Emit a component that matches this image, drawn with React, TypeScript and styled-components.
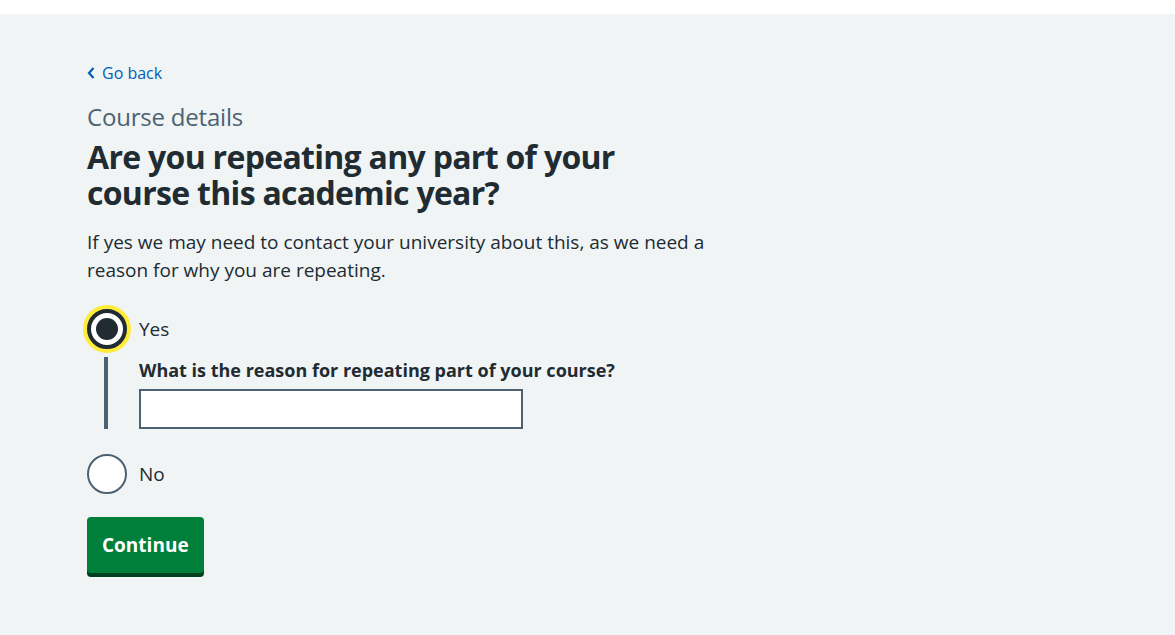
import React from "react";
import styled, { createGlobalStyle } from "styled-components";

const GlobalStyle = createGlobalStyle`
  * { box-sizing: border-box; }
  body {
    margin: 0;
    background: #ffffff;
    font-family: "Open Sans", "Noto Sans", Arial, sans-serif;
    color: #212b32;
  }
`;

export default function App() {
  return (
    <>
      <GlobalStyle />
      <TopStrip />
      <Main>
        <BackLink href="#">
          <svg width="9" height="14" viewBox="0 0 9 14" aria-hidden="true">
            <path d="M6.5 2 L2 7 L6.5 12" fill="none" stroke="#005eb8" strokeWidth="2.2" />
          </svg>
          Go back
        </BackLink>

        <Caption>Course details</Caption>
        <Heading>
          Are you repeating any part of your course this academic year?
        </Heading>
        <Hint>
          If yes we may need to contact your university about this, as we need a
          reason for why you are repeating.
        </Hint>

        <Radios>
          <RadioItem>
            <RadioCircle $checked $focused />
            <RadioLabel>Yes</RadioLabel>
          </RadioItem>
          <Conditional>
            <FieldLabel>What is the reason for repeating part of your course?</FieldLabel>
            <TextInput type="text" />
          </Conditional>
          <RadioItem>
            <RadioCircle />
            <RadioLabel>No</RadioLabel>
          </RadioItem>
        </Radios>

        <Button>Continue</Button>
      </Main>
    </>
  );
}

const TopStrip = styled.div`
  height: 14px;
  background: #ffffff;
`;

const Main = styled.main`
  background: #f0f4f5;
  min-height: 621px;
  padding: 47px 87px 40px;
`;

const BackLink = styled.a`
  display: inline-flex;
  align-items: center;
  gap: 6px;
  font-size: 16px;
  line-height: 24px;
  color: #005eb8;
  text-decoration: none;
`;

const Caption = styled.div`
  margin-top: 16px;
  font-size: 24px;
  line-height: 32px;
  letter-spacing: -0.2px;
  color: #4c6272;
`;

const Heading = styled.h1`
  margin: 6px 0 0;
  max-width: 560px;
  font-size: 32px;
  line-height: 36px;
  font-weight: 700;
  letter-spacing: -0.7px;
`;

const Hint = styled.p`
  margin: 17px 0 0;
  max-width: 640px;
  font-size: 19px;
  line-height: 28px;
`;

const Radios = styled.div`
  margin-top: 25px;
  display: flex;
  flex-direction: column;
`;

const RadioItem = styled.label`
  display: flex;
  align-items: center;
  gap: 12px;
  height: 40px;
`;

const RadioCircle = styled.span<{ $checked?: boolean; $focused?: boolean }>`
  position: relative;
  width: 40px;
  height: 40px;
  flex: none;
  border-radius: 50%;
  background: #ffffff;
  border: ${({ $checked }) => ($checked ? "4px solid #212b32" : "2px solid #4c6272")};
  box-shadow: ${({ $focused }) => ($focused ? "0 0 0 4px #ffeb3b" : "none")};
  &::after {
    content: "";
    display: ${({ $checked }) => ($checked ? "block" : "none")};
    position: absolute;
    inset: 5px;
    border-radius: 50%;
    background: #212b32;
  }
`;

const RadioLabel = styled.span`
  font-size: 19px;
  line-height: 28px;
`;

const Conditional = styled.div`
  margin: 8px 0 25px 17px;
  padding-left: 31px;
  border-left: 4px solid #4c6272;
  display: flex;
  flex-direction: column;
  gap: 6px;
`;

const FieldLabel = styled.div`
  font-size: 18px;
  line-height: 26px;
  font-weight: 700;
`;

const TextInput = styled.input`
  width: 384px;
  height: 40px;
  border: 2px solid #4c6272;
  background: #ffffff;
  border-radius: 0;
  outline: none;
`;

const Button = styled.button`
  margin-top: 23px;
  display: block;
  height: 56px;
  padding: 0 15px;
  border: none;
  border-radius: 4px;
  background: #007f3b;
  box-shadow: 0 4px 0 #00401e;
  color: #ffffff;
  font-family: inherit;
  font-size: 19px;
  font-weight: 700;
  cursor: pointer;
`;
